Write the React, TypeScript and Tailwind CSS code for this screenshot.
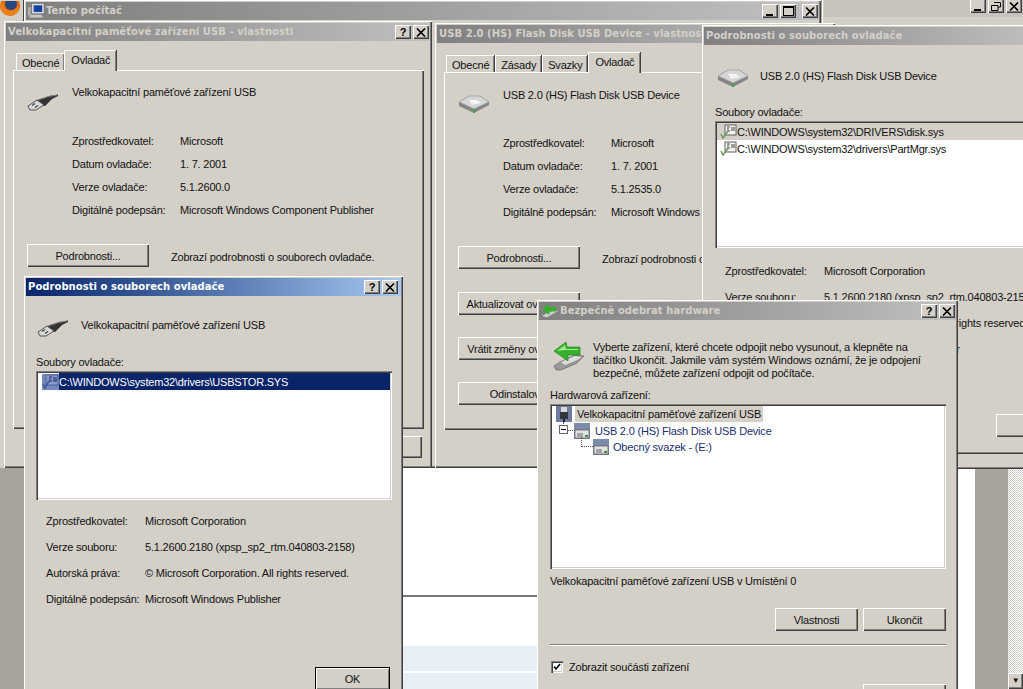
import type { ReactNode } from "react";

const raised = "shadow-[inset_1px_1px_0_#fff,inset_-1px_-1px_0_#404040,inset_-2px_-2px_0_#808080]";
const sunken = "shadow-[inset_1px_1px_0_#808080,inset_2px_2px_0_#404040,inset_-1px_-1px_0_#fff,inset_-2px_-2px_0_#d4d0c8]";

function UsbIcon() {
  return (
    <svg width="32" height="18" viewBox="0 0 32 18">
      <path d="M10 6 L22 2 L31 0.5 L31 2 L25 5 L18 12 L12 12 Z" fill="#333" />
      <path d="M11 6 L22 2.5 L30 1" fill="none" stroke="#8a8a8a" strokeWidth="0.8" />
      <path d="M1 12 L10 6 L17 11 L9 16 L3 16 Z" fill="#d8d8d8" stroke="#555" strokeWidth="1" />
      <path d="M5 11.5 L8 9.5 M8 13.5 L11 11.5" stroke="#444" strokeWidth="1.4" />
    </svg>
  );
}

function DiskIcon() {
  return (
    <svg width="32" height="20" viewBox="0 0 32 20">
      <path d="M1 8 L11 2 L22 2 L31 8 L31 11 L16 19 L1 12 Z" fill="#858585" />
      <path d="M1 8 L11 2 L22 2 L31 8 L16 15 Z" fill="#d6d6d6" stroke="#8e8e8e" strokeWidth="0.6" />
      <path d="M11 6 L19 6 L23 9 L14 11 Z" fill="#f4f4f4" />
      <path d="M15 15 L17 15 L17 19 L15 19 Z" fill="#43a447" />
    </svg>
  );
}

function RemoveIcon() {
  return (
    <svg width="32" height="30" viewBox="0 0 32 30">
      <path d="M1 25 L7 21 L22 14 L31 15 L24 22 L8 29 L3 29 Z" fill="#9a9a9a" stroke="#555" strokeWidth="0.6" />
      <path d="M8 21 L22 15 L29 16 L22 20 L12 24 Z" fill="#dcdcdc" />
      <path d="M1 10 L13 1 L14 6 L27 6 L27 14 L15 14 L15 20 Z" fill="#35b12e" stroke="#1d7a1b" strokeWidth="0.6" />
      <path d="M4 10 L12 4 L13 8 L25 8 L25 9 L12 9 Z" fill="#a3e98f" />
    </svg>
  );
}

function FileIcon({ selected = false }: { selected?: boolean }) {
  if (selected) {
    return (
      <svg width="17" height="16" viewBox="0 0 17 16" className="shrink-0">
        <rect x="0" y="0" width="17" height="16" fill="#7587bb" />
        <rect x="4" y="1" width="12" height="10" fill="#8c9cc9" stroke="#4c5f9c" />
        <path d="M7 3 H10 M7 5 H9 M7 7 H10 M12 3 V8 M14 3 V8" stroke="#0a246a" />
        <path d="M1 10 L3 14 L7 7" fill="none" stroke="#3f5a9c" strokeWidth="1.6" />
      </svg>
    );
  }
  return (
    <svg width="17" height="16" viewBox="0 0 17 16" className="shrink-0">
      <rect x="5" y="1" width="11" height="10" fill="#f4f4ec" stroke="#5f5f5f" />
      <path d="M7 3 H10 M7 5 H9 M7 7 H10 M12 3 V7 M14 3 V7" stroke="#444" />
      <path d="M1 10 L3 14 L8 7" fill="none" stroke="#6f9a63" strokeWidth="1.6" />
    </svg>
  );
}

function TreeDisk() {
  return (
    <svg width="16" height="16" viewBox="0 0 16 16" className="shrink-0">
      <rect x="0" y="0" width="16" height="16" fill="#7c8ba8" />
      <rect x="1" y="7" width="14" height="8" fill="#e2e2e2" stroke="#555" strokeWidth="0.7" />
      <path d="M3 11 H9 M3 13 H9" stroke="#666" />
      <rect x="11" y="12" width="3" height="2" fill="#3d8f40" />
    </svg>
  );
}

function TreePlug() {
  return (
    <svg width="16" height="16" viewBox="0 0 16 16" className="shrink-0">
      <rect x="0" y="0" width="16" height="16" fill="#6f7ca0" />
      <rect x="5" y="1" width="6" height="5" fill="#d8d8d8" />
      <rect x="4" y="6" width="8" height="7" fill="#33363f" />
      <rect x="7" y="13" width="2" height="3" fill="#22242b" />
    </svg>
  );
}

function Firefox() {
  return (
    <svg width="21" height="15" viewBox="0 0 21 15">
      <circle cx="10" cy="5" r="10" fill="#e46a12" />
      <circle cx="11" cy="3" r="6" fill="#27477f" />
      <path d="M3 0 Q3 10 11 10 Q16 10 18 4 L19 10 L12 15 L4 13 L0 6 Z" fill="#e9821b" />
    </svg>
  );
}

function ComputerIcon() {
  return (
    <svg width="17" height="16" viewBox="0 0 18 16">
      <rect x="4" y="0" width="13" height="11" fill="#dcdcdc" stroke="#666" strokeWidth="0.6" />
      <rect x="6" y="2" width="9" height="7" fill="#123ea6" />
      <path d="M1 15 L16 15 L14 12 L3 12 Z" fill="#c9c9c9" />
      <rect x="0" y="4" width="3" height="9" fill="#b0b0b0" />
    </svg>
  );
}

function CapBtn({ kind }: { kind: "?" | "x" | "min" | "max" | "restore" }) {
  return (
    <div className={`flex h-[14px] w-[16px] items-center justify-center bg-[#d4d0c8] text-black ${raised}`}>
      {kind === "?" && <span className="text-[11px] leading-none font-bold">?</span>}
      {kind === "x" && (
        <svg width="10" height="9" viewBox="0 0 10 9">
          <path d="M1 0.5 L9 8.5 M9 0.5 L1 8.5" stroke="#000" strokeWidth="1.6" />
        </svg>
      )}
      {kind === "min" && <div className="mt-[8px] mr-[2px] h-[2px] w-[7px] bg-black" />}
      {kind === "max" && <div className="h-[10px] w-[11px] border border-t-2 border-black" />}
      {kind === "restore" && (
        <svg width="10" height="10" viewBox="0 0 10 10">
          <path d="M3 1.5 H9.5 V6 H7 M0.5 4.5 H7 V9.5 H0.5 Z" fill="none" stroke="#000" />
        </svg>
      )}
    </div>
  );
}

function TitleBar({
  title,
  active = false,
  icon,
  buttons = ["?", "x"],
}: {
  title: string;
  active?: boolean;
  icon?: ReactNode;
  buttons?: ("?" | "x" | "min" | "max" | "restore")[];
}) {
  return (
    <div
      className={`flex h-[18px] shrink-0 items-center justify-between bg-gradient-to-r pl-[2px] ${
        active ? "from-[#0a246a] to-[#a6caf0] pr-[3px] text-white" : "from-[#808080] to-[#c0c0c0] pr-[1px] text-[#d4d0c8]"
      }`}
    >
      <div className="flex items-center gap-[1px] font-['DejaVu_Sans',sans-serif] text-[10px] font-bold tracking-[0.05px] whitespace-nowrap">
        {icon}
        {title}
      </div>
      <div className="flex gap-[2px]">
        {buttons.map((b, i) => (
          <div key={i} className={i === 2 ? "ml-[4px]" : ""}>
            <CapBtn kind={b} />
          </div>
        ))}
      </div>
    </div>
  );
}

function Win({ className, children }: { className: string; children: ReactNode }) {
  return (
    <div className={`absolute flex flex-col bg-[#d4d0c8] p-[2px] ${raised} ${className}`}>{children}</div>
  );
}

function Btn({ children, className, isDefault = false }: { children?: ReactNode; className: string; isDefault?: boolean }) {
  return (
    <div
      className={`flex shrink-0 items-center justify-center whitespace-nowrap overflow-hidden bg-[#d4d0c8] ${
        isDefault ? "border border-black shadow-[inset_1px_1px_0_#fff,inset_-1px_-1px_0_#808080]" : raised
      } ${className}`}
    >
      {children}
    </div>
  );
}

function Tab({ label, active = false }: { label: string; active?: boolean }) {
  return (
    <div
      className={`flex items-center border-t border-l border-white bg-[#d4d0c8] shadow-[inset_-1px_0_0_#808080,1px_0_0_#404040] ${
        active ? "relative z-10 mb-[-1px] h-[21px] px-[6px] pb-[3px]" : "h-[17px] px-[5px] pt-[1px]"
      }`}
    >
      {label}
    </div>
  );
}

function InfoRows({ rows, labelW, rowH }: { rows: string[][]; labelW: string; rowH: string }) {
  return (
    <div className="flex flex-col">
      {rows.map(([label, value]) => (
        <div key={label} className={`flex items-center whitespace-nowrap ${rowH}`}>
          <div className={`shrink-0 ${labelW}`}>{label}</div>
          <div>{value}</div>
        </div>
      ))}
    </div>
  );
}

const detailRows = [
  ["Zprostředkovatel:", "Microsoft Corporation"],
  ["Verze souboru:", "5.1.2600.2180 (xpsp_sp2_rtm.040803-2158)"],
  ["Autorská práva:", "© Microsoft Corporation. All rights reserved."],
  ["Digitálně podepsán:", "Microsoft Windows Publisher"],
];

export default function App() {
  return (
    <div className="relative h-[689px] w-[1023px] overflow-hidden bg-[#a8a49c] font-['Liberation_Sans',sans-serif] text-[11px] leading-[16px] tracking-[-0.2px] text-[#111]">
      {/* desktop leftovers behind the dialogs */}
      <div className="absolute top-0 left-0 h-[468px] w-[24px] border-r border-[#404040] bg-[#d4d0c8]" />
      <div className="absolute top-[1px] left-0">
        <Firefox />
      </div>
      <div className="absolute top-[468px] left-[403px] flex h-[221px] w-[134px] flex-col bg-white">
        <div className="h-[129px] border-b-2 border-[#777] bg-white" />
        <div className="h-[49px]" />
        <div className="h-[25px] bg-[#e8eff4]" />
        <div className="h-[2px] bg-white" />
        <div className="flex-1 bg-[#e8eff4]" />
      </div>
      <div className="absolute top-[453px] left-[958px] flex h-[236px] w-[65px]">
        <div className="w-[17px] bg-white" />
        <div className="w-[33px] bg-[#a8a49c]" />
        <div className="relative flex-1 bg-[repeating-conic-gradient(#d4d0c8_0_25%,#fff_0_50%)] bg-[length:2px_2px]">
          <div className={`absolute right-0 bottom-0 flex h-[16px] w-[15px] items-center justify-center bg-[#d4d0c8] text-[8px] ${raised}`}>
            ▼
          </div>
        </div>
      </div>

      {/* Tento počítač */}
      <Win className="top-0 left-[24px] h-[468px] w-[797px]">
        <TitleBar title="Tento počítač" buttons={["min", "max", "x"]} icon={<ComputerIcon />} />
      </Win>
      <Win className="top-[-3px] left-[822px] h-[472px] w-[210px]">
        <div className="flex h-[18px] justify-end gap-[2px] bg-[#c8c4bc] pr-[8px]">
          <CapBtn kind="min" />
          <CapBtn kind="restore" />
          <CapBtn kind="x" />
        </div>
      </Win>

      {/* Velkokapacitní ... vlastnosti */}
      <Win className="top-[21px] left-[4px] h-[447px] w-[428px]">
        <TitleBar title="Velkokapacitní paměťové zařízení USB - vlastnosti" />
        <div className="mt-[8px] ml-[8px] flex h-[21px] items-end pl-[2px]">
          <Tab label="Obecné" />
          <Tab label="Ovladač" active />
        </div>
        <div className={`ml-[7px] h-[359px] w-[411px] bg-[#d4d0c8] pt-[14px] pl-[14px] ${raised}`}>
          <div className="flex">
            <div className="mt-[10px] w-[45px]">
              <UsbIcon />
            </div>
            <div>Velkokapacitní paměťové zařízení USB</div>
          </div>
          <div className="mt-[17px] ml-[45px]">
            <InfoRows
              labelW="w-[108px]"
              rowH="h-[23px]"
              rows={[
                ["Zprostředkovatel:", "Microsoft"],
                ["Datum ovladače:", "1. 7. 2001"],
                ["Verze ovladače:", "5.1.2600.0"],
                ["Digitálně podepsán:", "Microsoft Windows Component Publisher"],
              ]}
            />
          </div>
          <div className="mt-[23px] flex items-center gap-[22px]">
            <Btn className="h-[23px] w-[122px]">Podrobnosti...</Btn>
            <div className="mt-[3px] whitespace-nowrap">Zobrazí podrobnosti o souborech ovladače.</div>
          </div>
        </div>
        <div className="mt-[7px] flex justify-end pr-[8px]">
          <Btn className="h-[22px] w-[75px]" />
        </div>
      </Win>

      {/* USB 2.0 ... vlastnosti */}
      <Win className="top-[23px] left-[435px] h-[445px] w-[400px]">
        <TitleBar title="USB 2.0 (HS) Flash Disk USB Device - vlastnosti" />
        <div className="mt-[8px] ml-[9px] flex h-[21px] items-end gap-[1px]">
          <Tab label="Obecné" />
          <Tab label="Zásady" />
          <Tab label="Svazky" />
          <Tab label="Ovladač" active />
        </div>
        <div className={`ml-[7px] h-[358px] w-[380px] bg-[#d4d0c8] pt-[15px] pl-[14px] ${raised}`}>
          <div className="flex">
            <div className="mt-[7px] w-[45px]">
              <DiskIcon />
            </div>
            <div>USB 2.0 (HS) Flash Disk USB Device</div>
          </div>
          <div className="mt-[17px] ml-[45px]">
            <InfoRows
              labelW="w-[108px]"
              rowH="h-[23px]"
              rows={[
                ["Zprostředkovatel:", "Microsoft"],
                ["Datum ovladače:", "1. 7. 2001"],
                ["Verze ovladače:", "5.1.2535.0"],
                ["Digitálně podepsán:", "Microsoft Windows Component Publisher"],
              ]}
            />
          </div>
          <div className="mt-[23px] flex items-center gap-[22px]">
            <Btn className="h-[23px] w-[122px]">Podrobnosti...</Btn>
            <div className="mt-[3px] whitespace-nowrap">Zobrazí podrobnosti o souborech ovladače.</div>
          </div>
          <div className="mt-[23px] flex flex-col gap-[22px]">
            <Btn className="h-[23px] w-[122px]">Aktualizovat ovladač...</Btn>
            <Btn className="h-[23px] w-[122px]">Vrátit změny ovladače</Btn>
            <Btn className="h-[23px] w-[122px]">Odinstalovat</Btn>
          </div>
        </div>
      </Win>

      {/* Podrobnosti - top right */}
      <Win className="top-[25px] left-[702px] h-[429px] w-[340px]">
        <TitleBar title="Podrobnosti o souborech ovladače" buttons={[]} />
        <div className="flex flex-col pl-[11px]">
          <div className="mt-[20px] flex items-start">
            <div className="mt-[3px] ml-[2px] w-[43px]">
              <DiskIcon />
            </div>
            <div className="mt-[3px]">USB 2.0 (HS) Flash Disk USB Device</div>
          </div>
          <div className="mt-[16px]">Soubory ovladače:</div>
          <div className={`mt-[1px] h-[127px] bg-white p-[2px] ${sunken}`}>
            <div className="flex h-[17px] items-center bg-[#d4d0c8] pl-[3px]">
              <FileIcon />
              C:\WINDOWS\system32\DRIVERS\disk.sys
            </div>
            <div className="flex h-[17px] items-center pl-[3px]">
              <FileIcon />
              C:\WINDOWS\system32\drivers\PartMgr.sys
            </div>
          </div>
          <div className="mt-[10px] ml-[10px]">
            <InfoRows labelW="w-[99px]" rowH="h-[26px]" rows={detailRows} />
          </div>
          <div className="mt-[52px] ml-[281px] flex">
            <Btn className="h-[23px] w-[75px]" />
          </div>
        </div>
      </Win>

      {/* Bezpečně odebrat hardware */}
      <Win className="top-[300px] left-[537px] h-[400px] w-[421px]">
        <TitleBar
          title="Bezpečně odebrat hardware"
          icon={
            <svg width="18" height="14" viewBox="0 0 32 26">
              <path d="M1 22 L22 12 L31 13 L10 25 Z" fill="#ccc" />
              <path d="M1 10 L13 1 L14 6 L27 6 L27 14 L15 14 L15 20 Z" fill="#35b12e" />
            </svg>
          }
        />
        <div className="flex flex-col pl-[11px]">
          <div className="mt-[21px] flex">
            <div className="mt-[0px] ml-[3px] w-[40px] shrink-0">
              <RemoveIcon />
            </div>
            <div className="leading-[13px]">
              Vyberte zařízení, které chcete odpojit nebo vysunout, a klepněte na
              <br />
              tlačítko Ukončit. Jakmile vám systém Windows oznámí, že je odpojení
              <br />
              bezpečné, můžete zařízení odpojit od počítače.
            </div>
          </div>
          <div className="mt-[7px]">Hardwarová zařízení:</div>
          <div className={`relative mt-[1px] h-[165px] w-[396px] bg-white p-[2px] ${sunken}`}>
            <div className="ml-[4px] flex h-[16px] items-center">
              <TreePlug />
              <span className="ml-[3px] bg-[#d4d0c8] px-[2px]">Velkokapacitní paměťové zařízení USB</span>
            </div>
            <div className="mt-[1px] ml-[22px] flex h-[16px] items-center text-[#1c2f6e]">
              <TreeDisk />
              <span className="ml-[5px]">USB 2.0 (HS) Flash Disk USB Device</span>
            </div>
            <div className="ml-[41px] flex h-[16px] items-center text-[#1c2f6e]">
              <TreeDisk />
              <span className="ml-[4px]">Obecný svazek - (E:)</span>
            </div>
            {/* tree lines and the expander box */}
            <div className="absolute top-[18px] left-[13px] h-[8px] border-l border-dotted border-[#555]" />
            <div className="absolute top-[26px] left-[18px] w-[5px] border-t border-dotted border-[#555]" />
            <div className="absolute top-[33px] left-[31px] h-[10px] w-[12px] border-b border-l border-dotted border-[#555]" />
            <div className="absolute top-[21px] left-[9px] flex h-[9px] w-[9px] items-center justify-center border border-[#666] bg-white">
              <div className="h-[1px] w-[5px] bg-black" />
            </div>
          </div>
          <div className="mt-[4px]">Velkokapacitní paměťové zařízení USB v Umístění 0</div>
          <div className="mt-[19px] flex w-[396px] justify-end gap-[5px]">
            <Btn className="h-[23px] w-[83px]">Vlastnosti</Btn>
            <Btn className="h-[23px] w-[83px]">Ukončit</Btn>
          </div>
          <div className="mt-[13px] w-[396px] border-t border-b border-t-[#808080] border-b-white" />
          <div className="mt-[13px] flex items-center gap-[6px]">
            <div className={`ml-[1px] flex h-[12px] w-[12px] items-center justify-center bg-white ${sunken}`}>
              <svg width="8" height="8" viewBox="0 0 8 8">
                <path d="M1 3.5 L3 6 L7 1" fill="none" stroke="#000" strokeWidth="1.6" />
              </svg>
            </div>
            Zobrazit součásti zařízení
          </div>
          <div className="mt-[9px] flex w-[396px] justify-end">
            <Btn className="h-[23px] w-[83px]" />
          </div>
        </div>
      </Win>

      {/* Podrobnosti - active */}
      <Win className="top-[276px] left-[24px] h-[420px] w-[379px]">
        <TitleBar title="Podrobnosti o souborech ovladače" active />
        <div className="flex flex-col pl-[10px]">
          <div className="mt-[19px] flex">
            <div className="mt-[5px] ml-[1px] w-[44px]">
              <UsbIcon />
            </div>
            <div className="mt-[2px]">Velkokapacitní paměťové zařízení USB</div>
          </div>
          <div className="mt-[16px]">Soubory ovladače:</div>
          <div className={`mt-[1px] h-[129px] w-[356px] bg-white p-[2px] ${sunken}`}>
            <div className="flex h-[17px] items-center pl-[4px]">
              <FileIcon selected />
              <span className="flex h-[17px] flex-1 items-center bg-[#0a246a] text-white">
                C:\WINDOWS\system32\drivers\USBSTOR.SYS
              </span>
            </div>
          </div>
          <div className="mt-[8px] ml-[10px]">
            <InfoRows labelW="w-[99px]" rowH="h-[26px]" rows={detailRows} />
          </div>
          <div className="mt-[55px] flex w-[354px] justify-end">
            <Btn isDefault className="h-[23px] w-[75px]">OK</Btn>
          </div>
        </div>
      </Win>
    </div>
  );
}
